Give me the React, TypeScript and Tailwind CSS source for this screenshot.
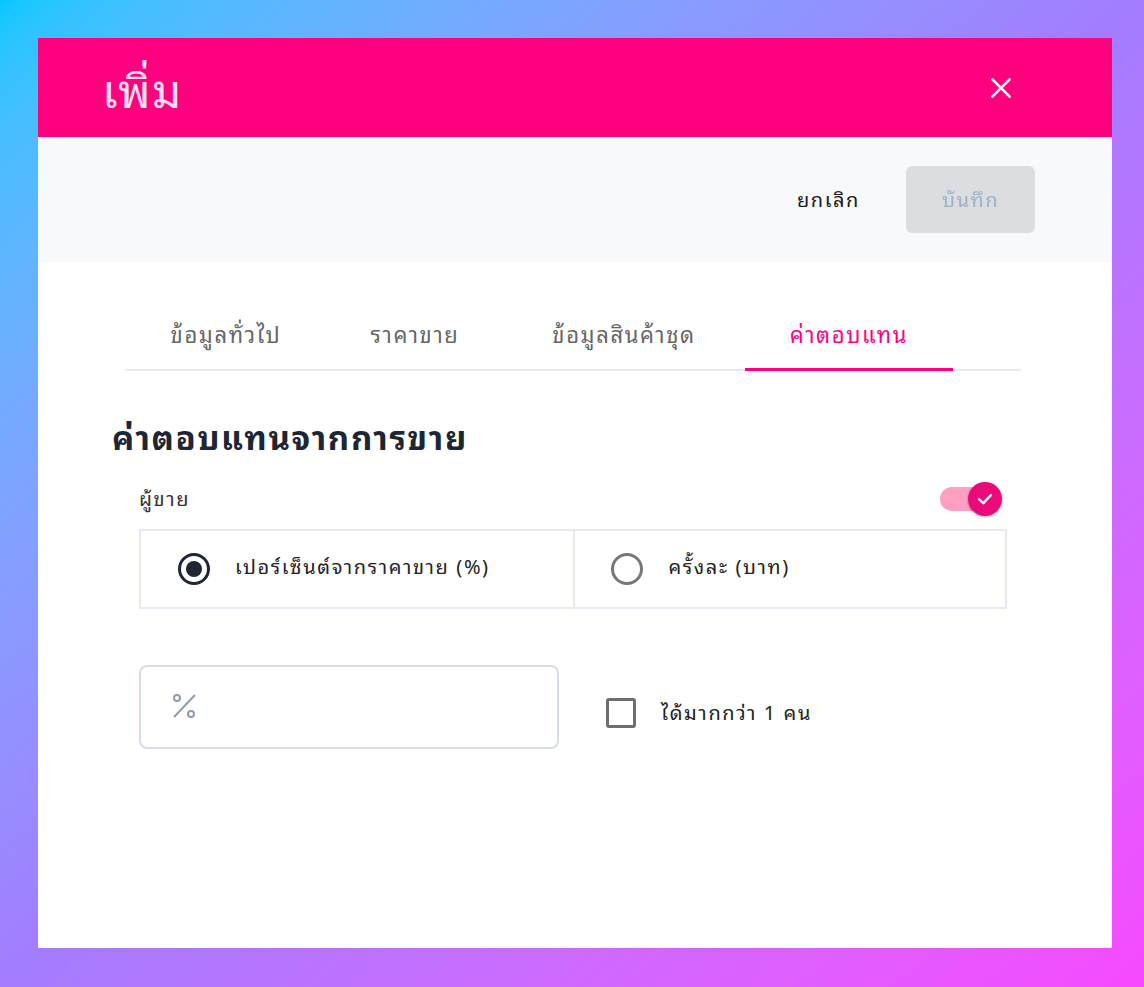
import React from "react";

export default function App() {
  return (
    <div className="w-[1144px] h-[987px] p-[38px] pb-[39px] bg-gradient-to-br from-[#00c8ff] via-[#a37cff] to-[#f748ff] font-['Noto_Sans','Noto_Sans_Thai_Looped',sans-serif] tracking-[0.1em]">
      <div className="w-[1074px] h-[910px] bg-white flex flex-col">
        {/* header */}
        <div className="h-[99px] bg-[#ff007f] flex items-center justify-between pl-[64px] pr-[98px]">
          <div className="text-[46px] text-[#ffdcee] leading-none pt-[4px]">เพิ่ม</div>
          <svg width="26" height="26" viewBox="0 0 24 24" fill="none" stroke="white" strokeWidth="2.4" strokeLinecap="round">
            <path d="M4 4 L20 20 M20 4 L4 20" />
          </svg>
        </div>
        {/* toolbar */}
        <div className="h-[125px] bg-[#f8f9fb] flex items-center justify-end pr-[77px] gap-[46px]">
          <div className="text-[20px] text-[#1a1a1a]">ยกเลิก</div>
          <div className="w-[129px] h-[67px] rounded-[6px] bg-[#dcdde0] flex items-center justify-center text-[20px] text-[#a3b1c6]">
            บันทึก
          </div>
        </div>
        {/* tabs */}
        <div className="mt-[38px] ml-[87px] mr-[91px] flex border-b-2 border-[#e6eaf2] h-[71px]">
          <div className="w-[202px] flex items-center justify-center text-[22px] text-[#666666]">ข้อมูลทั่วไป</div>
          <div className="w-[176px] flex items-center justify-center text-[22px] text-[#666666]">ราคาขาย</div>
          <div className="w-[242px] flex items-center justify-center text-[22px] text-[#666666]">ข้อมูลสินค้าชุด</div>
          <div className="w-[208px] flex items-center justify-center text-[22px] text-[#ff007f] border-b-[3px] border-[#ff007f] -mb-[2px]">
            ค่าตอบแทน
          </div>
        </div>
        {/* content */}
        <div className="pl-[74px] pr-[105px]">
          <div className="mt-[50px] text-[33px] font-bold text-[#1e2533] leading-none">ค่าตอบแทนจากการขาย</div>
          <div className="pl-[27px] mt-[27px]">
            <div className="flex items-center justify-between h-[36px]">
              <div className="text-[20px] text-[#333333]">ผู้ขาย</div>
              <div className="relative w-[62px] h-[36px] mr-[5px]">
                <div className="absolute left-0 top-[6px] w-[50px] h-[24px] rounded-full bg-[#ff9fc2]"></div>
                <div className="absolute right-0 top-[1px] w-[34px] h-[34px] rounded-full bg-[#ea0a7a] shadow-[0_1px_3px_rgba(0,0,0,0.3)] flex items-center justify-center">
                  <svg width="20" height="20" viewBox="0 0 24 24" fill="none" stroke="white" strokeWidth="3" strokeLinecap="round" strokeLinejoin="round">
                    <path d="M5 12.5 L10 17 L19 7.5" />
                  </svg>
                </div>
              </div>
            </div>
            <div className="mt-[12px] h-[80px] border-2 border-[#e6eaf2] flex">
              <div className="flex-1 flex items-center pl-[37px] border-r-2 border-[#e6eaf2]">
                <div className="w-[32px] h-[32px] rounded-full border-[3px] border-[#1e2533] flex items-center justify-center">
                  <div className="w-[16px] h-[16px] rounded-full bg-[#1e2533]"></div>
                </div>
                <div className="ml-[25px] text-[20px] text-[#222222] -mt-[4px]">เปอร์เซ็นต์จากราคาขาย (%)</div>
              </div>
              <div className="flex-1 flex items-center pl-[36px]">
                <div className="w-[32px] h-[32px] rounded-full border-[3px] border-[#777777]"></div>
                <div className="ml-[26px] text-[20px] text-[#222222] -mt-[4px]">ครั้งละ (บาท)</div>
              </div>
            </div>
            <div className="mt-[56px] flex items-center">
              <div className="w-[420px] h-[84px] rounded-[8px] border-2 border-[#d5dde9] flex items-center pl-[30px]">
                <svg width="30" height="30" viewBox="0 0 30 30" fill="none" stroke="#8e9bb0" strokeWidth="2">
                  <circle cx="6" cy="6" r="3" />
                  <circle cx="20" cy="22" r="3" />
                  <path d="M24 3 L3 25" />
                </svg>
              </div>
              <div className="ml-[47px] mt-[12px] flex items-center">
                <div className="w-[30px] h-[30px] rounded-[3px] border-[3px] border-[#6e6e6e]"></div>
                <div className="ml-[25px] text-[20px] text-[#222222]">ได้มากกว่า 1 คน</div>
              </div>
            </div>
          </div>
        </div>
      </div>
    </div>
  );
}
